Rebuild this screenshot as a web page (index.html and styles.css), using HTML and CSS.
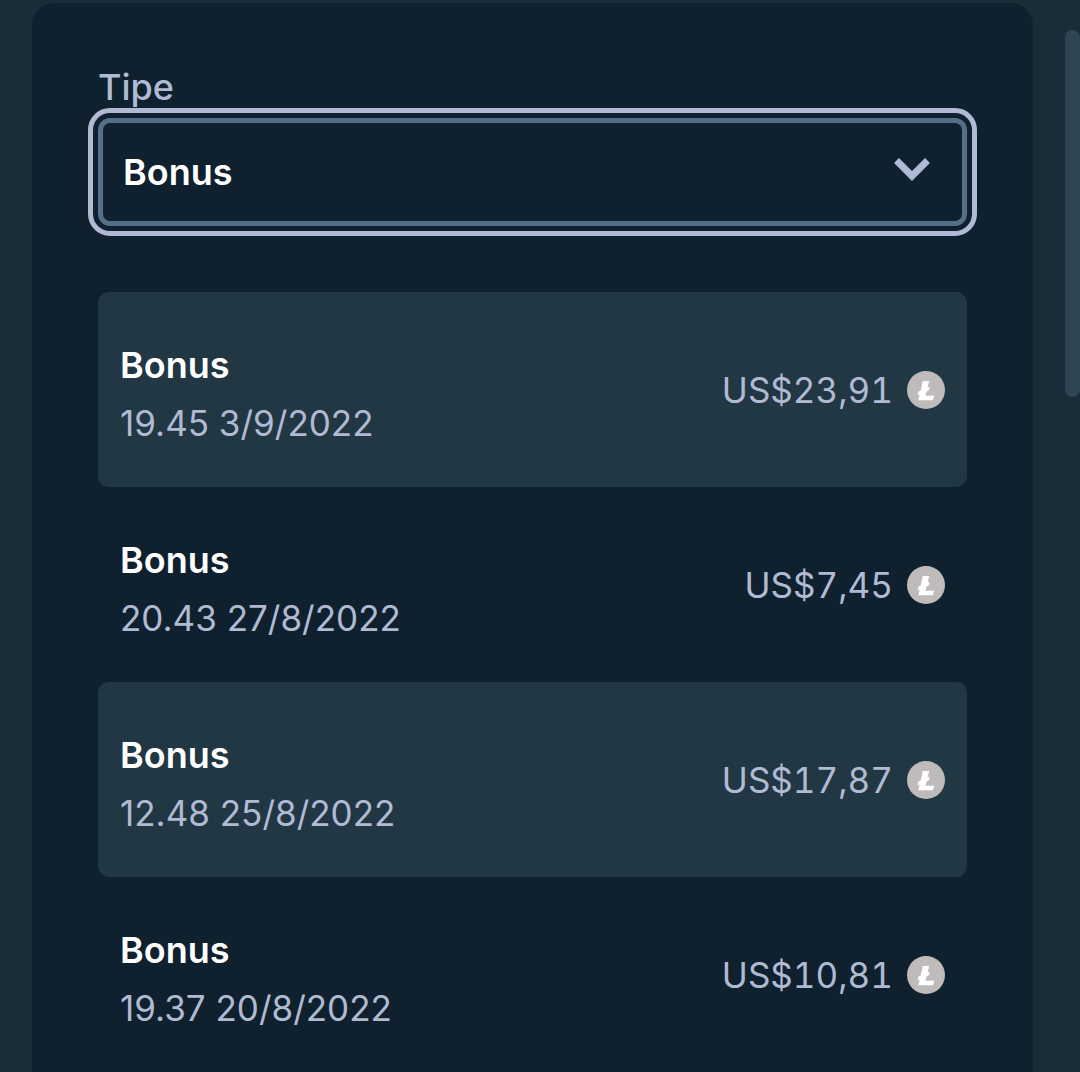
FILE: index.html
```
<!DOCTYPE html>
<html lang="id">
<head>
  <meta charset="UTF-8">
  <meta name="viewport" content="width=device-width, initial-scale=1.0">
  <title>Transaksi – Bonus</title>
  <link rel="stylesheet" href="styles.css">
</head>
<body>
  <!-- Litecoin icon, used by every row -->
  <svg class="sprite" aria-hidden="true">
    <symbol id="ltc" viewBox="0 0 38 38">
      <circle cx="19" cy="19" r="19" fill="#bfbbba"/>
      <path d="M15.800 10h6.400l-1.700 6.600 2.200-.9-1 3.900-2.200.9-1 4.300h8.800l-1.400 4.400H11.200l1.500-5.800-2.200.9 1-3.900 2.200-.9z" fill="#fff"/>
    </symbol>
  </svg>

  <main class="panel">
    <label class="label" for="type">Tipe</label>
    <div class="select-wrap">
      <select id="type" class="select">
        <option>Bonus</option>
      </select>
      <svg class="chevron" viewBox="0 0 36 24" aria-hidden="true">
        <path d="M2.500 2.500L18 18L33.500 2.500" fill="none" stroke="#b1bad3" stroke-width="7"/>
      </svg>
    </div>

    <ul class="list">
      <li class="row">
        <div class="info">
          <span class="name">Bonus</span>
          <span class="date">19.45 3/9/2022</span>
        </div>
        <div class="amount">US$23,91 <svg class="coin"><use href="#ltc"/></svg></div>
      </li>
      <li class="row">
        <div class="info">
          <span class="name">Bonus</span>
          <span class="date">20.43 27/8/2022</span>
        </div>
        <div class="amount">US$7,45 <svg class="coin"><use href="#ltc"/></svg></div>
      </li>
      <li class="row">
        <div class="info">
          <span class="name">Bonus</span>
          <span class="date">12.48 25/8/2022</span>
        </div>
        <div class="amount">US$17,87 <svg class="coin"><use href="#ltc"/></svg></div>
      </li>
      <li class="row">
        <div class="info">
          <span class="name">Bonus</span>
          <span class="date">19.37 20/8/2022</span>
        </div>
        <div class="amount">US$10,81 <svg class="coin"><use href="#ltc"/></svg></div>
      </li>
    </ul>
  </main>

  <div class="scroll-thumb"></div>
</body>
</html>
```

FILE: styles.css
```
* {
  box-sizing: border-box;
}

body {
  margin: 0;
  padding: 3px 47px 0 32px;
  height: 100vh;
  overflow: hidden;
  background: #1a2c38;
  color: #b1bad3;
  font-family: Inter, sans-serif;
  font-size: 36px;
  line-height: 58px;
}

.sprite {
  display: none;
}

/* === PANEL === */
.panel {
  min-height: 100%;
  padding: 64px 66px 0;
  background: #0f212e;
  border-radius: 22px 22px 0 0;
}

/* === TYPE SELECT === */
.label {
  display: block;
  height: 51px;
  line-height: 40px;
  font-weight: 500;
}

.select-wrap {
  position: relative;
}

.select {
  display: block;
  width: 100%;
  height: 108px;
  padding: 0 20px;
  appearance: none;
  background: #0f212e;
  color: #fff;
  font: inherit;
  font-weight: 600;
  border: 5px solid #557086;
  border-radius: 12px;
  outline: 5px solid #b1bad3;
  outline-offset: 5px;
}

.chevron {
  position: absolute;
  top: 40px;
  right: 37px;
  width: 36px;
  height: 24px;
  pointer-events: none;
}

/* === TRANSACTIONS === */
.list {
  margin: 66px 0 0;
  padding: 0;
  list-style: none;
}

.row {
  display: flex;
  justify-content: space-between;
  align-items: center;
  height: 195px;
  padding: 0 22px;
  border-radius: 11px;
}

.row:nth-child(odd) {
  background: #213743;
}

.info {
  display: flex;
  flex-direction: column;
  padding-top: 8px;
}

.name {
  color: #fff;
  font-weight: 600;
}

.date,
.amount {
  font-size: 35px;
}

.amount {
  display: flex;
  align-items: center;
  gap: 14px;
  font-variant-numeric: tabular-nums;
}

.coin {
  width: 38px;
  height: 38px;
}

/* === SCROLLBAR === */
.scroll-thumb {
  position: fixed;
  top: 30px;
  right: 0;
  width: 15px;
  height: 367px;
  background: #2f4553;
  border-radius: 8px;
}
```
